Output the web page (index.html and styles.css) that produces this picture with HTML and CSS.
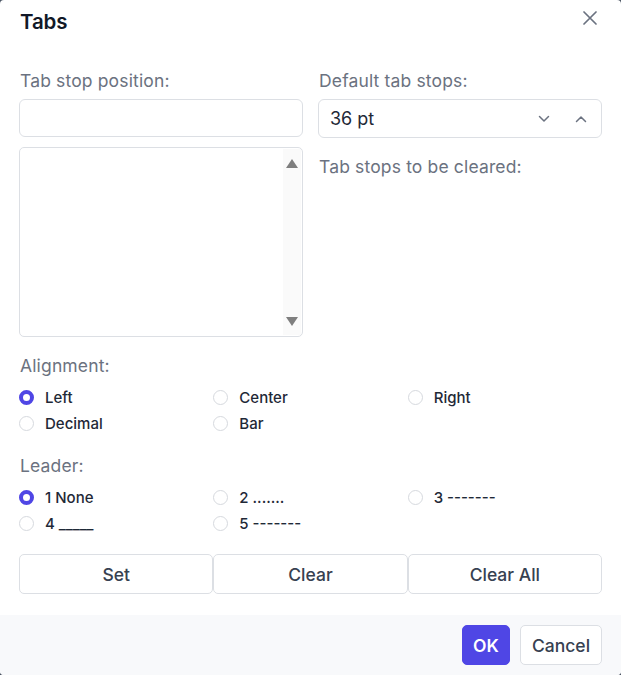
FILE: index.html
```html
<!DOCTYPE html>
<html>
<head>
<meta charset="utf-8">
<link rel="stylesheet" href="styles.css">
</head>
<body>
<div class="dialog">
  <div class="header">
    <div class="title">Tabs</div>
    <button class="close" aria-label="Close">
      <svg width="14" height="14" viewBox="0 0 14 14"><path d="M1 1L13 13M13 1L1 13" stroke="#6b7280" stroke-width="1.7" stroke-linecap="round"/></svg>
    </button>
  </div>
  <div class="content">
    <div class="cols">
      <div class="col">
        <div class="label top">Tab stop position:</div>
        <div class="input"></div>
        <div class="listbox">
          <div class="scrollbar">
            <span class="tri up"></span>
            <span class="tri down"></span>
          </div>
        </div>
      </div>
      <div class="col">
        <div class="label top">Default tab stops:</div>
        <div class="select">
          <span class="value">36 pt</span>
          <svg class="chev" width="12" height="8" viewBox="0 0 12 8"><path d="M1.5 1.5L6 6L10.5 1.5" fill="none" stroke="#6b7280" stroke-width="1.5" stroke-linecap="round" stroke-linejoin="round"/></svg>
          <svg class="chev" width="12" height="8" viewBox="0 0 12 8"><path d="M1.5 6.5L6 2L10.5 6.5" fill="none" stroke="#6b7280" stroke-width="1.5" stroke-linecap="round" stroke-linejoin="round"/></svg>
        </div>
        <div class="label cleared">Tab stops to be cleared:</div>
      </div>
    </div>

    <div class="label section">Alignment:</div>
    <div class="radios">
      <div class="radio"><span class="dot on"></span>Left</div>
      <div class="radio"><span class="dot"></span>Center</div>
      <div class="radio"><span class="dot"></span>Right</div>
      <div class="radio"><span class="dot"></span>Decimal</div>
      <div class="radio"><span class="dot"></span>Bar</div>
    </div>

    <div class="label section leader">Leader:</div>
    <div class="radios">
      <div class="radio"><span class="dot on"></span>1 None</div>
      <div class="radio"><span class="dot"></span>2 .......</div>
      <div class="radio"><span class="dot"></span>3 -------</div>
      <div class="radio"><span class="dot"></span>4 _____</div>
      <div class="radio"><span class="dot"></span>5 -------</div>
    </div>

    <div class="actions">
      <button class="btn">Set</button>
      <button class="btn">Clear</button>
      <button class="btn">Clear All</button>
    </div>
  </div>
  <div class="footer">
    <button class="btn primary">OK</button>
    <button class="btn cancel">Cancel</button>
  </div>
</div>
</body>
</html>
```

FILE: styles.css
```css
* { box-sizing: border-box; }
html, body {
  margin: 0;
  padding: 0;
  background: #4b5563;
}
body {
  font-family: Inter, "Noto Sans", "Liberation Sans", sans-serif;
  width: 621px;
  height: 675px;
}
.dialog {
  width: 621px;
  height: 675px;
  background: #ffffff;
  border-radius: 4px;
  overflow: hidden;
  display: flex;
  flex-direction: column;
}
.header {
  height: 42px;
  display: flex;
  align-items: center;
  justify-content: space-between;
  padding: 0 24px 0 20px;
}
.title {
  font-size: 20.5px;
  font-weight: 600;
  color: #111827;
  letter-spacing: -0.1px;
}
.close {
  border: none;
  background: none;
  padding: 0;
  width: 14px;
  height: 14px;
  display: flex;
  margin-top: -6px;
}
.content {
  padding: 28px 19px 0 19px;
  flex: 1;
}
.cols {
  display: grid;
  grid-template-columns: 284px 284px;
  column-gap: 15px;
}
.col {
  display: flex;
  flex-direction: column;
}
.label {
  font-size: 17.5px;
  line-height: 22px;
  color: #6b7280;
  padding-left: 1px;
  margin-bottom: 9px;
  letter-spacing: 0.15px;
}
.label.top {
  margin-bottom: 7px;
}
.input {
  height: 38px;
  border: 1px solid #dcdfe4;
  border-radius: 6px;
  background: #fff;
}
.listbox {
  margin-top: 10px;
  height: 190px;
  border: 1px solid #dcdfe4;
  border-radius: 5px;
  display: flex;
  justify-content: flex-end;
  padding: 1px 1px 1px 0;
}
.scrollbar {
  width: 18px;
  background: #fafafa;
  display: flex;
  flex-direction: column;
  justify-content: space-between;
  align-items: center;
  padding: 10px 0 9px;
}
.tri {
  width: 0;
  height: 0;
  border-left: 6px solid transparent;
  border-right: 6px solid transparent;
}
.tri.up { border-bottom: 9px solid #7f7f7f; }
.tri.down { border-top: 9px solid #7f7f7f; }
.select {
  height: 39px;
  border: 1px solid #dcdfe4;
  border-radius: 6px;
  display: flex;
  align-items: center;
  padding: 0 14px 0 11px;
  gap: 25px;
}
.select .value {
  flex: 1;
  font-size: 18px;
  color: #1f2937;
}
.cleared {
  margin-top: 18px;
}
.section {
  margin-top: 18px;
  margin-bottom: 7px;
}
.leader {
  margin-top: 19px;
}
.radios {
  display: grid;
  grid-template-columns: repeat(3, 1fr);
  grid-auto-rows: 26px;
}
.radio {
  display: flex;
  align-items: center;
  font-size: 15px;
  color: #1f2937;
  font-weight: 500;
}
.dot {
  width: 15px;
  height: 15px;
  border-radius: 50%;
  border: 1px solid #d6d9de;
  background: #fff;
  margin: 0 11px 0 0;
  flex: none;
}
.dot.on {
  border: 4.5px solid #4f46e5;
  background: #fff;
}
.actions {
  margin-top: 18px;
  display: grid;
  grid-template-columns: repeat(3, 1fr);
}
.btn {
  font-family: Inter, "Noto Sans", "Liberation Sans", sans-serif;
  height: 40px;
  border: 1px solid #dcdfe4;
  border-radius: 5px;
  background: #fff;
  font-size: 17.5px;
  font-weight: 500;
  color: #374151;
  padding: 0;
}
.footer {
  height: 60px;
  background: #f8f9fb;
  display: flex;
  justify-content: flex-end;
  align-items: center;
  gap: 10px;
  padding: 0 19px;
}
.primary {
  width: 48px;
  background: #4f46e5;
  border-color: #4f46e5;
  color: #fff;
  font-weight: 600;
}
.cancel {
  width: 82px;
}
```
